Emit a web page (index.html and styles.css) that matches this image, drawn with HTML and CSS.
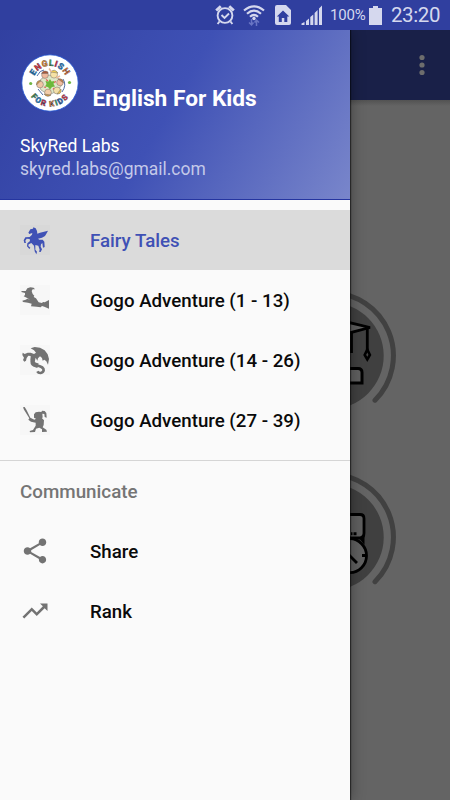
FILE: index.html
```html
<!DOCTYPE html>
<html lang="en">
<head>
<meta charset="utf-8">
<meta name="viewport" content="width=device-width, initial-scale=1">
<title>English For Kids</title>
<link rel="stylesheet" href="styles.css">
</head>
<body>
<div class="screen">
  <header class="status">
    <svg class="alarm" width="20" height="22" viewBox="0 0 20 22" fill="none" stroke="currentColor"><circle cx="10" cy="11.500" r="7.400" stroke-width="1.900"/><path d="M6.500 11l3 3 4.500-4.500M4.500 17.500L2.600 20M15.500 17.500L17.400 20" stroke-width="1.900"/><path d="M1.200 6.600L5.800 2.200M18.800 6.600L14.200 2.200" stroke-width="2.800"/></svg>
    <svg class="wifi" width="22" height="23" viewBox="0 0 22 23" fill="none" stroke="currentColor"><path d="M1 6.500Q11-1.800 21 6.500M4 9.800Q11 3.600 18 9.800M7 12.800Q11 9.200 15 12.800" stroke-width="2.200"/><circle cx="11" cy="14.500" r="1.700" fill="currentColor" stroke="none"/><path d="M8.500 21v-6M6 18.500l2.500 2.500 2-2.500M13.500 16v6M11.500 18.500l2-2.500 2.500 2.500" stroke="#6975c4" stroke-width="1.500"/></svg>
    <svg class="sim" width="16" height="20" viewBox="0 0 16 20"><path fill="currentColor" fill-rule="evenodd" d="M2 0h9l5 5v13q0 2-2 2H2q-2 0-2-2V2q0-2 2-2zM8 5.500L1.800 11.500h2V17h3v-4h2.500v4h3v-5.500h2z"/></svg>
    <svg class="signal" width="22" height="20" viewBox="0 0 22 20" fill="currentColor"><path d="M.5 20v-1.500l3-1.500v3zM5 20v-4l3-2.500V20zM9.300 20v-8l3-2.500V20zM13.600 20V8l3-3v15zM18 20V3.500L21 .500V20z"/></svg>
    <span class="percent">100%</span>
    <svg class="battery" width="13" height="19" viewBox="0 0 13 19"><path fill="currentColor" d="M4 0h5v2h4v17H0V2h4z"/></svg>
    <span class="clock">23:20</span>
  </header>
  <main class="content">
    <div class="toolbar">
      <svg width="6" height="22" viewBox="0 0 6 22" fill="#6d6d6d"><circle cx="3" cy="3.500" r="2.600"/><circle cx="3" cy="11" r="2.600"/><circle cx="3" cy="18.500" r="2.600"/></svg>
    </div>
    <div class="canvas">
      <svg width="100" height="700" viewBox="350 100 100 700" fill="none">
        <circle cx="330.400" cy="355.700" r="53.300" fill="#404040"/>
        <path d="M330.400 292.700A63 63 0 0 1 375 400.200" stroke="#414141" stroke-width="5" stroke-linecap="round"/>
        <path d="M345 321.500l25 6L345 334" fill="#606060" stroke="#000" stroke-width="2.800"/>
        <path d="M351.500 332v21" stroke="#000" stroke-width="2.800"/>
        <path d="M367.300 328v22" stroke="#000" stroke-width="2.800"/>
        <path d="M367.300 349.500l-2.600 5.500 2.600 4.500 2.600-4.500z" fill="#444" stroke="#000" stroke-width="2.600"/>
        <path d="M345 368.500h13q4 0 4 4v10.500H345z" fill="#606060" stroke="#000" stroke-width="3"/>
        <circle cx="330.400" cy="537.200" r="53.300" fill="#404040"/>
        <path d="M330.400 474.200A63 63 0 0 1 375 581.700" stroke="#414141" stroke-width="5" stroke-linecap="round"/>
        <path d="M345 514.500h15q4 0 4 4V533q0 5-4 5H345z" fill="#606060" stroke="#000" stroke-width="2.800"/>
        <path d="M351 533.800h1.500M353.500 533.800h3" stroke="#000" stroke-width="3"/>
        <path d="M359 538l5.500 7v-12z" fill="#000"/>
        <circle cx="349.500" cy="555.700" r="17" fill="#606060" stroke="#000" stroke-width="2.800"/>
        <path d="M348 554l9 9M362 555.500h4" stroke="#000" stroke-width="2.800"/>
      </svg>
    </div>
  </main>
  <aside class="drawer">
    <section class="profile">
      <div class="brand">
        <svg class="logo" width="58" height="58" viewBox="0 0 58 58">
          <defs><path id="top" d="M12 29a17 17 0 0 1 34 0"/><path id="bottom" d="M5.500 29a23.500 23.500 0 0 0 47 0"/></defs>
          <circle cx="29" cy="29" r="28.200" fill="#fff" stroke="#2154d2" stroke-width=".8"/>
          <g class="logo-text">
            <text text-anchor="middle"><textPath href="#top" startOffset="50%"><tspan fill="#1685c7">E</tspan><tspan fill="#e33135">N</tspan><tspan fill="#ed8b20">G</tspan><tspan fill="#46a848">L</tspan><tspan fill="#d52744">I</tspan><tspan fill="#187dbd">S</tspan><tspan fill="#ec7427">H</tspan></textPath></text>
            <text class="lower" text-anchor="middle"><textPath href="#bottom" startOffset="50%"><tspan fill="#4aaa3e">F</tspan><tspan fill="#1583be">O</tspan><tspan fill="#cd2942">R</tspan> <tspan fill="#e8842b">K</tspan><tspan fill="#31a15b">I</tspan><tspan fill="#2368b2">D</tspan><tspan fill="#db3042">S</tspan></textPath></text>
          </g>
          <circle cx="9.700" cy="29.500" r="1.600" fill="#70b543"/><circle cx="48.500" cy="28.500" r="1.600" fill="#70b543"/>
          <path d="M16 22q3-6 7-6M42 25q4 6-1 13M17 35l5 6" fill="none" stroke="#3a5c9c" stroke-width=".9"/>
          <g stroke="#77706a" stroke-width=".5">
            <path d="M20 25l8-4 9 3 4 7-5 6-8 4-8-5-3-6z" fill="#dfe7c8"/>
            <circle cx="24" cy="21" r="3.400" fill="#efb99c"/><circle cx="33" cy="20.500" r="3.600" fill="#f6e2a6"/><circle cx="39" cy="28.500" r="3.300" fill="#f0bca0"/><circle cx="36" cy="36.500" r="3.500" fill="#f3dfa8"/><circle cx="27" cy="38.500" r="3.400" fill="#f3cda8"/><circle cx="19" cy="30.500" r="3.400" fill="#f0c4a4"/>
            <path d="M20.500 19.500q2-4 6.500-1.500l0 1.500z" fill="#a8573a"/><path d="M29.500 18q4-4 7.500 1z" fill="#f0cf50"/><path d="M37 25q5-1 5.500 4z" fill="#c27a45"/><path d="M15.500 31q0-5 4.500-4.500zM23 40q3 4 7 1z" fill="#cf9644"/><path d="M36 40q5 0 4-5z" fill="#e8c04c"/>
            <path d="M30.500 18l-2.500-3.500M35 24l4-2" stroke="#e8b796" stroke-width="1.500"/>
          </g>
          <path d="M29 25l1.500 2.500 3-.5-1 3 1.500 2.500-3 .5-2 2.500-2-2.500-3-.5 1.500-2.500-1-3 3 .500z" fill="#6cb83a"/>
          <path d="M25 25.500l2 1.500M34.500 27l-1 2M23 33l2 .500M32 35.500l1-1.500" stroke="#e0605c" stroke-width="1.200"/>
        </svg>
        <h1>English For Kids</h1>
      </div>
      <p class="name">SkyRed Labs</p>
      <p class="mail">skyred.labs@gmail.com</p>
    </section>
    <nav>
      <ul class="group">
        <li class="item active"><svg class="picto" viewBox="30 30 90 90"><path class="plate" d="M30 30h90v90H30z"/><path d="M70 37L77 40 81 48 82 56 90 53 114 47 110 55 105 63 96 68 84 71 88 74 98 74 103 80 104 96 99 98 97 84 93 88 92 95 96 103 92 111 87 110 89 104 85 92 76 90 76 104 81 110 79 118 74 109 72 92 64 84 56 88 55 93 61 98 58 102 51 94 52 85 60 78 59 72 50 71 46 77 48 84 43 84 41 76 46 67 59 66 66 59 67 54 58 57 55 53 61 43 69 41z"/></svg><span>Fairy Tales</span></li>
        <li class="item"><svg class="picto" viewBox="30 30 90 90"><path class="plate" d="M30 30h90v90H30z"/><path d="M52 40L61 37 71 38 75 43 68 43 65 48 68 57 73 62 71 66 78 70 86 82 96 84 99 81 104 82 117 75 117 101 103 95 96 93 92 97 80 95 63 94 65 86 54 83 39 81 37 77 47 74 52 71 60 74 50 68 41 64 45 60 45 54 34 51 35 48 47 48z"/></svg><span>Gogo Adventure (1 - 13)</span></li>
        <li class="item"><svg class="picto" viewBox="30 30 90 90"><path class="plate" d="M30 30h90v90H30z"/><path d="M62 40L74 36 90 38 104 46 113 58 117 72 114 89 109 79 103 74 98 77 96 69 90 64 84 70 82 77 77 68 73 71 62 75 62 63 55 62 50 69 48 77 43 80 39 75 42 68 37 60 38 53 44 57 53 53 62 53 72 57 78 53 72 46z"/><path class="body" d="M69 60C74 70 60 82 74 89L84 92"/><path class="tail" d="M78 91C91 93 102 96 101 106 99 116 86 116 82 109"/></svg><span>Gogo Adventure (14 - 26)</span></li>
        <li class="item"><svg class="picto" viewBox="30 30 90 90"><path class="plate" d="M30 30h90v90H30z"/><path d="M39 37L44 36 50 46 61 68 73 74 78 71 72 68 72 58 77 52 87 50 94 51 96 47 104 48 109 54 110 68 104 66 103 57 97 56 98 67 96 70 102 76 101 90 98 97 109 104 111 110 96 111 96 103 88 98 78 101 75 111 60 112 59 108 69 105 77 92 77 83 63 80 55 74 58 70 42 44z"/></svg><span>Gogo Adventure (27 - 39)</span></li>
      </ul>
      <div class="group communicate">
        <h2>Communicate</h2>
        <ul>
          <li class="item"><svg viewBox="0 0 24 24"><path d="M18 16.080c-.76 0-1.440.3-1.960.77L8.910 12.700c.05-.23.090-.46.090-.7s-.040-.47-.090-.7l7.050-4.110c.54.5 1.250.81 2.040.81 1.660 0 3-1.340 3-3s-1.340-3-3-3-3 1.340-3 3c0 .24.040.47.090.7L8.040 9.810C7.500 9.310 6.790 9 6 9c-1.660 0-3 1.340-3 3s1.340 3 3 3c.79 0 1.500-.31 2.040-.81l7.120 4.160c-.05.21-.08.43-.08.65 0 1.610 1.310 2.920 2.920 2.920s2.920-1.310 2.920-2.920-1.310-2.920-2.920-2.920z"/></svg><span>Share</span></li>
          <li class="item"><svg viewBox="0 0 24 24"><path d="M16 6l2.290 2.290-4.880 4.880-4-4L2 16.590 3.410 18l6-6 4 4 6.300-6.290L22 12V6z"/></svg><span>Rank</span></li>
        </ul>
      </div>
    </nav>
  </aside>
</div>
</body>
</html>
```

FILE: styles.css
```css
* { box-sizing: border-box; }
body, h1, h2, p, ul { margin: 0; padding: 0; }
ul { list-style: none; }
body { font-family: Roboto, sans-serif; }
svg { display: block; flex: none; }

.screen {
  position: relative;
  display: flex;
  flex-direction: column;
  width: 450px;
  height: 800px;
  overflow: hidden;
  background: #646464;
}

.status {
  display: flex;
  align-items: center;
  height: 30px;
  padding-left: 215px;
  background: #303f9f;
  color: #d5d8ee;
}
.wifi { margin-left: 8px; }
.sim { margin-left: 10px; }
.signal { margin-left: 10px; }
.percent { width: 37px; margin-left: 7px; font-size: 15px; letter-spacing: -.2px; }
.battery { margin-left: 2px; }
.clock { margin-left: 9px; font-size: 20.5px; letter-spacing: -.4px; }

.content { display: flex; flex: 1; flex-direction: column; }
.toolbar {
  display: flex;
  align-items: center;
  justify-content: flex-end;
  height: 70px;
  padding-right: 25px;
  background: #192048;
}
.canvas {
  display: flex;
  flex: 1;
  justify-content: flex-end;
  background: linear-gradient(#525252, #646464 6px);
}

.drawer {
  position: absolute;
  top: 30px;
  bottom: 0;
  left: 0;
  width: 350px;
  background: #fafafa;
  box-shadow: 0 0 14px rgba(0, 0, 0, .4), 1px 0 1px rgba(0, 0, 0, .5);
  clip-path: inset(0 -20px 0 0);
}
.profile {
  height: 170px;
  padding: 24px 20px 0;
  border-bottom: 1px solid #2535a0;
  background: linear-gradient(119.7deg, #303f9f, #3f51b5 50%, #7986cb) 0 -30px / 350px 200px no-repeat;
  color: #fff;
}
.brand { display: flex; gap: 13.5px; height: 76px; }
.logo { margin-left: 1px; }
.logo-text { font: 900 8.6px Roboto, sans-serif; letter-spacing: .5px; stroke: #34405c; stroke-width: .35px; }
.lower { font-size: 8px; letter-spacing: 1.2px; }
h1 { padding-top: 30px; font-size: 22.7px; line-height: 30px; font-weight: 700; white-space: nowrap; }
.name { padding-top: 4px; font-size: 17.5px; line-height: 24px; }
.mail { color: #c4c9e9; font-size: 17.45px; line-height: 22px; }

.group { padding-top: 10px; }
.item {
  display: flex;
  align-items: center;
  gap: 40px;
  height: 60px;
  padding-left: 20px;
  color: #0a0a0a;
  font-size: 18.7px;
  font-weight: 500;
  white-space: nowrap;
}
.item span { padding-top: 2px; }
.item svg { width: 30px; height: 30px; fill: #737373; }
.item .plate { fill: #777; opacity: .025; }
.item .tail, .item .body { fill: none; stroke: #737373; stroke-width: 8px; }
.item .body { stroke-width: 14px; }
.active { background: #dbdbdb; color: #3f51b5; }
.item.active svg { fill: #3f51b5; }
.communicate { margin-top: 10px; padding-top: 0; border-top: 1px solid #d5d5d5; }
h2 { height: 60px; padding: 1px 0 0 20px; color: #757575; font-size: 18.8px; line-height: 60px; font-weight: 500; }
```
